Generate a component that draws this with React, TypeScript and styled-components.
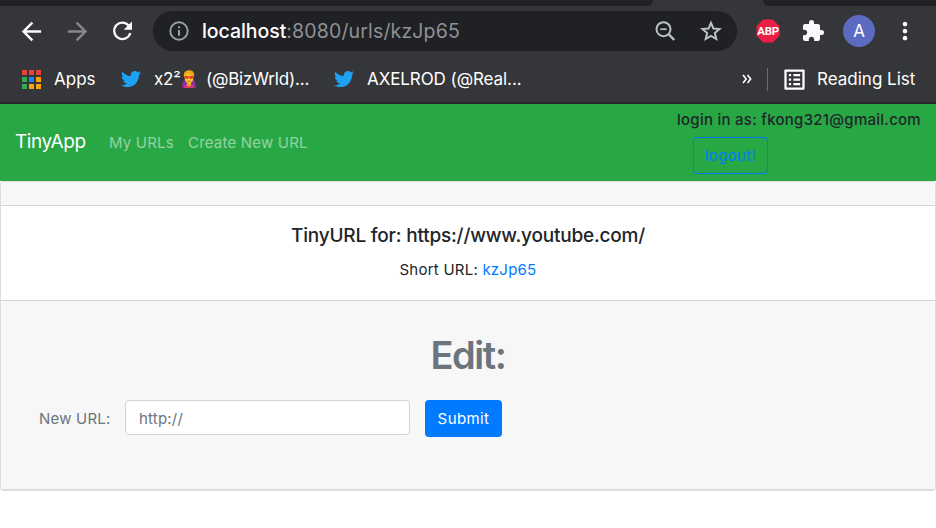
import React from "react";
import styled, { createGlobalStyle } from "styled-components";
import {
  MdArrowBack,
  MdArrowForward,
  MdExtension,
  MdListAlt,
  MdMoreVert,
} from "react-icons/md";
import { FaTwitter } from "react-icons/fa";

const GlobalStyle = createGlobalStyle`
  *, *::before, *::after { box-sizing: border-box; }
  body {
    margin: 0;
    background: #fff;
    color: #212529;
    font-family: Inter, "Liberation Sans", sans-serif;
    overflow: hidden;
  }
  h1, h5, p { margin: 0; }
  svg { display: block; flex: none; }
`;

const Page = styled.div`
  width: 936px;
  height: 528px;
  display: flex;
  flex-direction: column;
`;

/* ---------- browser chrome ---------- */

const Chrome = styled.header`
  height: 104px;
  flex: none;
  background: #35363a;
  border-bottom: 2px solid #292a2d;
`;

const TabStrip = styled.div`
  height: 6px;
  display: flex;
  justify-content: space-between;
`;

const TabEdge = styled.div<{ $width: number; $side: "left" | "right" }>`
  width: ${(p) => p.$width}px;
  background: #202124;
  border-radius: ${(p) => (p.$side === "left" ? "0 0 9px 0" : "0 0 0 9px")};
`;

const Toolbar = styled.div`
  height: 50px;
  display: flex;
  align-items: center;
  padding-left: 17px;
  color: #f1f3f4;
`;

const NavIcon = styled.span<{ $muted?: boolean; $gap?: number }>`
  display: flex;
  margin-right: ${(p) => p.$gap ?? 0}px;
  color: ${(p) => (p.$muted ? "#86888a" : "#f8f9fa")};
`;

const Omnibox = styled.div`
  width: 584px;
  height: 40px;
  margin-left: 17px;
  padding: 0 14px 0 15px;
  display: flex;
  align-items: center;
  border-radius: 20px;
  background: #202124;
  color: #9aa0a6;
`;

const Address = styled.div`
  flex: 1;
  margin-left: 12px;
  font-size: 19.5px;
  letter-spacing: 0.15px;
  white-space: nowrap;
  color: #8f9194;
`;

const Host = styled.span`
  color: #fff;
  font-weight: 500;
  letter-spacing: -0.05px;
`;

const OmniAction = styled.span<{ $gap?: number }>`
  display: flex;
  margin-right: ${(p) => p.$gap ?? 0}px;
  color: #bdc1c6;
`;

const Extensions = styled.div`
  flex: 1;
  display: flex;
  align-items: center;
  padding-left: 19px;
`;

const Avatar = styled.div`
  width: 32px;
  height: 32px;
  margin: 0 16px 0 18px;
  border-radius: 50%;
  background: #5c6bc0;
  color: #fff;
  font-size: 17px;
  line-height: 33px;
  text-align: center;
`;

const BookmarkBar = styled.div`
  height: 46px;
  display: flex;
  align-items: center;
  padding-left: 22px;
  color: #fff;
  font-size: 17px;
`;

const AppsGrid = styled.span`
  display: grid;
  grid-template-columns: repeat(3, 5px);
  grid-auto-rows: 5px;
  gap: 2px;
`;

const AppsCell = styled.i<{ $color: string }>`
  background: ${(p) => p.$color};
`;

const BookmarkText = styled.span<{ $width: number; $spacing?: number }>`
  width: ${(p) => p.$width}px;
  margin-left: 13px;
  display: flex;
  align-items: center;
  letter-spacing: ${(p) => p.$spacing ?? 0}px;
  white-space: pre;
`;

const ReadingListText = styled(BookmarkText)`
  margin-left: 9px;
`;

const TwitterBird = styled(FaTwitter)`
  color: #1da1f2;
`;

const Overflow = styled.span`
  margin-left: auto;
  display: flex;
`;

const Separator = styled.span`
  width: 1px;
  height: 23px;
  margin: 0 13px 0 15px;
  background: #6b6c70;
`;

/* ---------- application ---------- */

const Navbar = styled.nav`
  height: 77px;
  flex: none;
  display: flex;
  align-items: center;
  padding: 0 15px;
  background: #28a745;
`;

const Brand = styled.a`
  width: 94px;
  padding-bottom: 2px;
  color: #fff;
  font-size: 19px;
  letter-spacing: -0.4px;
`;

const NavLink = styled.a<{ $width: number }>`
  width: ${(p) => p.$width}px;
  color: rgba(255, 255, 255, 0.5);
  font-size: 15px;
  letter-spacing: 0.2px;
  white-space: nowrap;
`;

const Account = styled.div`
  width: 244px;
  height: 100%;
  margin-left: auto;
  padding-top: 6px;
`;

const LoginLabel = styled.div`
  font-size: 15px;
  font-weight: 500;
  line-height: 20px;
  letter-spacing: 0.26px;
  white-space: nowrap;
`;

const LogoutButton = styled.button`
  width: 75px;
  height: 37px;
  margin: 7px 0 0 16px;
  padding: 0;
  display: block;
  border: 1px solid #007bff;
  border-radius: 4px;
  background: transparent;
  color: #007bff;
  font: 400 15px Inter, sans-serif;
  letter-spacing: 0.35px;
`;

const Card = styled.main`
  height: 310px;
  flex: none;
  display: flex;
  flex-direction: column;
  border: 1px solid #dcdcdc;
  border-bottom-width: 2px;
  border-radius: 4px;
  overflow: hidden;
  text-align: center;
`;

const CardHeader = styled.div`
  height: 24px;
  background: #f7f7f7;
  border-bottom: 1px solid #d5d5d5;
`;

const CardBody = styled.section`
  height: 95px;
  padding-top: 18px;
  border-bottom: 1px solid #d5d5d5;
`;

const CardTitle = styled.h5`
  font-size: 19px;
  font-weight: 500;
  line-height: 24px;
  letter-spacing: -0.2px;
`;

const ShortUrl = styled.p`
  margin-top: 10px;
  font-size: 15px;
  line-height: 23px;
  letter-spacing: 0.23px;
`;

const ShortLink = styled.a`
  color: #007bff;
`;

const CardFooter = styled.section`
  flex: 1;
  background: #f7f7f7;
  color: #6c757d;
`;

const EditHeading = styled.h1`
  margin-top: 31px;
  font-size: 38px;
  font-weight: 600;
  line-height: 46px;
  letter-spacing: -1.4px;
`;

const EditForm = styled.form`
  display: flex;
  align-items: flex-start;
  margin-top: 22px;
  padding-left: 38px;
  font-size: 15px;
  letter-spacing: 0.2px;
`;

const FieldLabel = styled.label`
  width: 86px;
  text-align: left;
  line-height: 37px;
`;

const UrlInput = styled.input`
  width: 285px;
  height: 35px;
  padding: 2px 13px 0;
  border: 1px solid #ced4da;
  border-radius: 4px;
  background: #fff;
  font: 400 15px Inter, sans-serif;
  letter-spacing: 0.2px;
  &::placeholder {
    color: #6c757d;
    opacity: 1;
  }
`;

const SubmitButton = styled.button`
  width: 77px;
  height: 37px;
  margin-left: 15px;
  padding: 0;
  border: 0;
  border-radius: 4px;
  background: #007bff;
  color: #fff;
  font: 400 15px Inter, sans-serif;
  letter-spacing: 0.4px;
`;

const appColors = [
  "#ea4335", "#ea4335", "#ea4335",
  "#34a853", "#1a85ff", "#fba40a",
  "#34a853", "#fba40a", "#fba40a",
];

const ReloadIcon = () => (
  <svg width="27" height="28" viewBox="1 0 27 28">
    <path
      d="M21.200 9.300A8.200 8.200 0 1 0 22.300 16"
      fill="none"
      stroke="currentColor"
      strokeWidth="2.300"
    />
    <path d="M24 4.500v8.300h-8.300z" fill="currentColor" />
  </svg>
);

const InfoIcon = () => (
  <svg width="22" height="22" viewBox="0 0 22 22">
    <circle cx="11" cy="11" r="8.700" fill="none" stroke="currentColor" strokeWidth="1.900" />
    <path d="M10 6.300h2v2h-2zM10 9.900h2v5.800h-2z" fill="currentColor" />
  </svg>
);

const ZoomOutIcon = () => (
  <svg width="22" height="22" viewBox="0 0 22 22" fill="none" stroke="currentColor" strokeWidth="2">
    <circle cx="9.500" cy="9.200" r="7" />
    <path d="M6.300 9.200h6.400" strokeWidth="1.700" />
    <path d="M14.500 14.200l5.800 5.800" strokeWidth="2.400" />
  </svg>
);

const StarIcon = () => (
  <svg width="24" height="24" viewBox="0 0 24 24">
    <path
      d="M12 3.800l2.400 5.700 6.100.5-4.700 4 1.500 6-5.300-3.200L6.700 20l1.500-6-4.700-4 6.100-.5z"
      fill="none"
      stroke="currentColor"
      strokeWidth="2"
    />
  </svg>
);

const HeroEmoji = () => (
  <svg width="16" height="19" viewBox="0 0 16 19">
    <path d="M1 18c0-4 1-8 3-8h8c2 0 3 4 3 8l-3-1H4z" fill="#8b2fa0" />
    <path d="M3 18c0-3 2-4 5-4s5 1 5 4z" fill="#d93a72" />
    <path d="M6 11h4v4l-2 2-2-2z" fill="#e9a51f" />
    <ellipse cx="8" cy="7.600" rx="4.400" ry="6" fill="#fbc62d" />
    <path d="M3 7C2 2 5 0 8.500.2 12 .2 14 3 12.900 7L12 5C9 5 7 4 6 3 5 4 4 5 4 7z" fill="#f0a818" />
    <path d="M3.500 6c1.500-.5 3-.3 4.500.4 1.500-.7 3-.9 4.500-.4-.1 2-1 3-2.500 3-1 0-1.500-.8-2-1.200C7.500 8.200 7 9 6 9 4.500 9 3.600 8 3.500 6z" fill="#e5402e" />
    <path d="M6.500 11.300h3" stroke="#a8481b" strokeWidth=".8" />
  </svg>
);

const AdblockBadge = styled.span`
  width: 24px;
  height: 24px;
  display: flex;
  align-items: center;
  justify-content: center;
  background: #ed1e45;
  clip-path: polygon(30% 2%, 70% 2%, 98% 30%, 98% 70%, 70% 98%, 30% 98%, 2% 70%, 2% 30%);
  color: #fff;
  font: 700 11.5px/24px Roboto, sans-serif;
  letter-spacing: -0.3px;
`;

const DoubleChevron = () => (
  <svg width="10" height="10" viewBox="0 0 10 10" fill="none" stroke="#fff" strokeWidth="1.600">
    <path d="M1 1l3.200 4L1 9M5.500 1l3.200 4-3.200 4" />
  </svg>
);

export default function App() {
  return (
    <Page>
      <GlobalStyle />
      <Chrome>
        <TabStrip>
          <TabEdge $width={653} $side="left" />
          <TabEdge $width={173} $side="right" />
        </TabStrip>
        <Toolbar>
          <NavIcon $gap={17}><MdArrowBack size={29} /></NavIcon>
          <NavIcon $gap={17} $muted><MdArrowForward size={29} /></NavIcon>
          <NavIcon><ReloadIcon /></NavIcon>
          <Omnibox>
            <InfoIcon />
            <Address><Host>localhost</Host>:8080/urls/kzJp65</Address>
            <OmniAction $gap={23}><ZoomOutIcon /></OmniAction>
            <OmniAction><StarIcon /></OmniAction>
          </Omnibox>
          <Extensions>
            <NavIcon $gap={21}><AdblockBadge>ABP</AdblockBadge></NavIcon>
            <NavIcon><MdExtension size={24} /></NavIcon>
            <Avatar>A</Avatar>
            <NavIcon><MdMoreVert size={28} /></NavIcon>
          </Extensions>
        </Toolbar>
        <BookmarkBar>
          <AppsGrid>
            {appColors.map((color, i) => <AppsCell key={i} $color={color} />)}
          </AppsGrid>
          <BookmarkText $width={67}>Apps</BookmarkText>
          <TwitterBird size={20} />
          <BookmarkText $width={180} $spacing={-0.17}>x2²<HeroEmoji />  (@BizWrld)...</BookmarkText>
          <TwitterBird size={20} />
          <BookmarkText $width={160} $spacing={-0.08}>AXELROD (@Real...</BookmarkText>
          <Overflow><DoubleChevron /></Overflow>
          <Separator />
          <MdListAlt size={27} />
          <ReadingListText $width={119}>Reading List</ReadingListText>
        </BookmarkBar>
      </Chrome>
      <Navbar>
        <Brand>TinyApp</Brand>
        <NavLink $width={79}>My URLs</NavLink>
        <NavLink $width={130}>Create New URL</NavLink>
        <Account>
          <LoginLabel>login in as: fkong321@gmail.com</LoginLabel>
          <LogoutButton>logout!</LogoutButton>
        </Account>
      </Navbar>
      <Card>
        <CardHeader />
        <CardBody>
          <CardTitle>TinyURL for: https://www.youtube.com/</CardTitle>
          <ShortUrl>Short URL: <ShortLink>kzJp65</ShortLink></ShortUrl>
        </CardBody>
        <CardFooter>
          <EditHeading>Edit:</EditHeading>
          <EditForm onSubmit={(e) => e.preventDefault()}>
            <FieldLabel htmlFor="new-url">New URL:</FieldLabel>
            <UrlInput id="new-url" placeholder="http://" />
            <SubmitButton>Submit</SubmitButton>
          </EditForm>
        </CardFooter>
      </Card>
    </Page>
  );
}
